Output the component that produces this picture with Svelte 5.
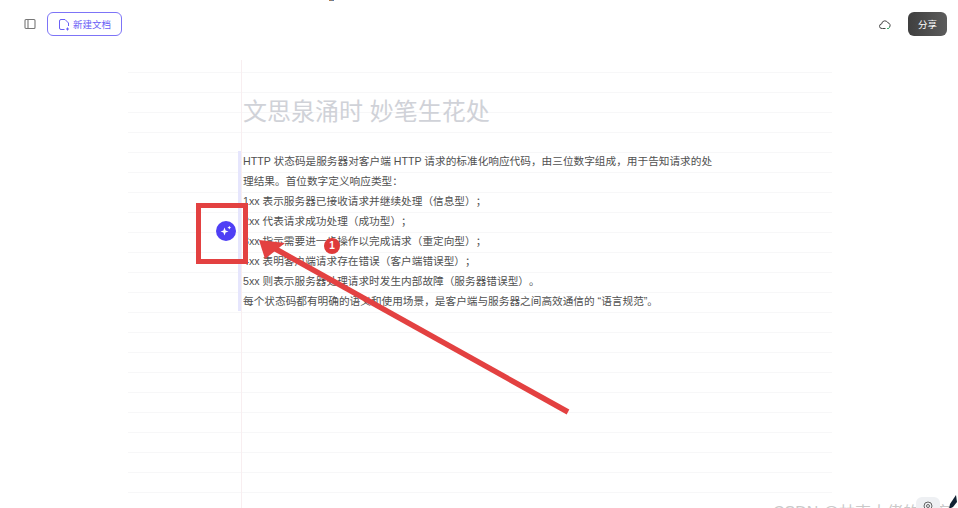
<script>
  const rows = [
    'HTTP 状态码是服务器对客户端 HTTP 请求的标准化响应代码\uFF0C由三位数字组成\uFF0C用于告知请求的处',
    '理结果。首位数字定义响应类型\uFF1A',
    '1xx 表示服务器已接收请求并继续处理\uFF08信息型\uFF09\uFF1B',
    '2xx 代表请求成功处理\uFF08成功型\uFF09\uFF1B',
    '3xx 指示需要进一步操作以完成请求\uFF08重定向型\uFF09\uFF1B',
    '4xx 表明客户端请求存在错误\uFF08客户端错误型\uFF09\uFF1B',
    '5xx 则表示服务器处理请求时发生内部故障\uFF08服务器错误型\uFF09。',
    '每个状态码都有明确的语义和使用场景\uFF0C是客户端与服务器之间高效通信的 “语言规范”。'
  ];
</script>

<div class="page">
  <header class="bar">
    <div class="left">
      <svg class="side" width="12" height="12" viewBox="0 0 12 12" fill="none" stroke="#777" stroke-width="1.1"><rect x="1" y="1.5" width="10" height="9" rx="1"/><path d="M4 2v8"/></svg>
      <button class="new">
        <svg width="12" height="13" viewBox="0 0 12 13" fill="none" stroke="#6a5ff6" stroke-width="1"><path d="M6.5 11.5H3a1.5 1.5 0 0 1-1.500-1.500V3A1.500 1.500 0 0 1 3 1.500h4L10.500 5v3"/><path d="M9.500 9.500v3M8 11h3"/></svg>
        新建文档
      </button>
    </div>
    <div class="right">
      <svg width="13" height="11" viewBox="0 0 13 11" fill="none"><path d="M3.500 9.500H3a2.300 2.300 0 0 1-.3-4.600A3.200 3.200 0 0 1 8.800 3.700a2.800 2.800 0 0 1 1.700 4.500" stroke="#444" stroke-width="1"/><path d="M3.500 9.500h3" stroke="#444" stroke-width="1"/><path d="M8 9l1 1 1.800-2" stroke="#3cb371" stroke-width="1"/></svg>
      <button class="share">分享</button>
    </div>
  </header>

  <main class="paper">
    <div class="col">
      <h1>文思泉涌时 妙笔生花处</h1>
      <div class="quote">
        {#each rows as r}
          <p>{r}</p>
        {/each}
      </div>
    </div>
  </main>

  <div class="ai">
    <svg width="12" height="12" viewBox="0 0 12 12" fill="#fff"><path d="M4.500 2.500 5.600 5.400 8.500 6.500 5.600 7.600 4.500 10.500 3.400 7.600.5 6.500 3.400 5.400z"/><path d="M9.300.8 9.900 2.100 11.200 2.700 9.900 3.300 9.300 4.600 8.700 3.300 7.400 2.700 8.700 2.100z"/></svg>
  </div>

  <svg class="mark" width="958" height="508" viewBox="0 0 958 508">
    <rect x="198.500" y="205.500" width="47" height="56" fill="none" stroke="#e34141" stroke-width="5"/>
    <path d="M568 412 272 247" stroke="#e34141" stroke-width="5.500" fill="none"/>
    <path d="M259 240 285 243 265 259z" fill="#e34141"/>
    <circle cx="332" cy="246" r="8" fill="#df3a3a"/>
  </svg>
  <span class="badge">1</span>

  <span class="top-dots"></span>
  <span class="water">CSDN @林克大佬的博客</span>
  <span class="help">
    <svg width="10" height="10" viewBox="0 0 10 10" fill="none" stroke="#666"><circle cx="5" cy="5" r="4"/><circle cx="5" cy="5" r="1.500"/></svg>
  </span>
  <svg class="pen" width="10" height="14" viewBox="0 0 10 14"><path d="M8 0 9 7 5 12 1 14 2 9z" fill="#123"/></svg>
</div>

<style>
  :global(body) { margin: 0; background: #fff; }
  .page {
    position: relative;
    width: 958px;
    height: 508px;
    overflow: hidden;
    font-family: "Liberation Sans", "Noto Sans CJK SC", sans-serif;
    color: #4a4a4a;
  }
  .bar {
    height: 48px;
    display: flex;
    align-items: center;
    justify-content: space-between;
    padding: 0 11px 0 24px;
    box-sizing: border-box;
  }
  .left, .right { display: flex; align-items: center; }
  .left { gap: 11px; }
  .right { gap: 16px; }
  .side { display: block; }
  .new {
    width: 75px;
    height: 24px;
    border: 1px solid #7d74f7;
    border-radius: 6px;
    background: #fff;
    color: #6a5ff6;
    font: 9.500px "Liberation Sans", "Noto Sans CJK SC", sans-serif;
    display: flex;
    align-items: center;
    justify-content: center;
    gap: 3px;
    padding: 0;
  }
  .share {
    width: 39px;
    height: 24px;
    border: 0;
    border-radius: 6px;
    background: linear-gradient(90deg, #3f3f3f, #5c5c5c);
    color: #fff;
    font: 9.500px "Liberation Sans", "Noto Sans CJK SC", sans-serif;
    padding: 0;
  }
  .paper {
    margin: 12px 126px 0 128px;
    height: 448px;
    background-image: linear-gradient(transparent 19px, #f7f7f8 19px);
    background-size: 100% 20px;
    background-position: 0 -7px;
  }
  .col {
    margin-left: 113px;
    height: 100%;
    border-left: 1px solid #f8eef0;
    padding-top: 32px;
    box-sizing: border-box;
  }
  h1 {
    margin: 0 0 19px 1px;
    font-size: 24px;
    line-height: 40px;
    font-weight: 400;
    color: #d0d2d8;
  }
  .quote {
    margin-left: -4px;
    border-left: 3px solid #e6e6fd;
    padding-left: 2px;
  }
  p {
    margin: 0;
    font-size: 10.670px;
    line-height: 20px;
    height: 20px;
    white-space: nowrap;
    color: #505050;
    text-spacing-trim: space-all;
  }
  .ai {
    position: absolute;
    left: 216px;
    top: 221px;
    width: 20px;
    height: 20px;
    border-radius: 50%;
    background: #4f3ff5;
    display: flex;
    align-items: center;
    justify-content: center;
  }
  .mark { position: absolute; left: 0; top: 0; pointer-events: none; }
  .badge {
    position: absolute;
    left: 324px;
    top: 238px;
    width: 16px;
    height: 16px;
    text-align: center;
    color: #fff;
    font-size: 10px;
    font-weight: 700;
    line-height: 16px;
  }
  .top-dots {
    position: absolute;
    left: 329px;
    top: 0;
    width: 5px;
    height: 1px;
    background: linear-gradient(90deg, #c47a30, #4a7fc0);
  }
  .water {
    position: absolute;
    left: 773px;
    top: 503px;
    font-size: 16px;
    line-height: 20px;
    color: #c9c9c9;
    white-space: nowrap;
  }
  .help {
    position: absolute;
    left: 916px;
    top: 497px;
    width: 24px;
    height: 24px;
    border-radius: 6px;
    background: #eef0f3;
    display: flex;
    justify-content: center;
    padding-top: 4px;
    box-sizing: border-box;
  }
  .pen { position: absolute; left: 948px; top: 495px; }
</style>
